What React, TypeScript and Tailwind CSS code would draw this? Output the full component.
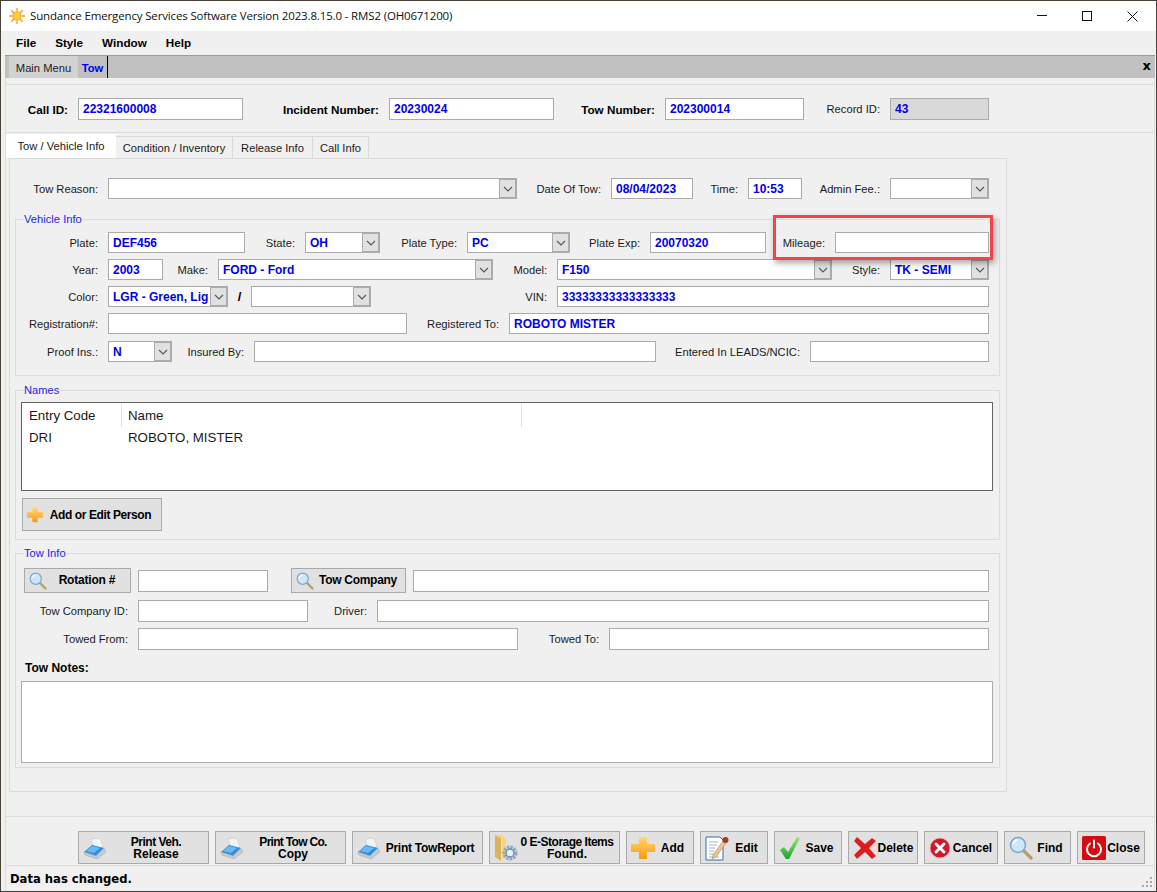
import type { ReactNode } from "react";

const sans = "font-['Liberation_Sans',Arial,sans-serif]";

function Lbl({ className = "", children }: { className?: string; children: ReactNode }) {
    return <div className={`shrink-0 whitespace-nowrap pr-[10px] pt-[1px] text-right text-[11.2px] text-[#1a1a1a] ${className}`}>{children}</div>;
}

function BoldLbl({ className = "", children }: { className?: string; children: ReactNode }) {
    return <div className={`shrink-0 whitespace-nowrap pr-[10px] pt-[2px] text-right text-[11.7px] font-bold text-black ${className}`}>{children}</div>;
}

function Field({ className = "", value, gray, tall }: { className?: string; value?: string; gray?: boolean; tall?: boolean }) {
    return (
        <div className={`flex shrink-0 items-center border border-[#ababab] px-[4px] text-[12px] font-bold text-[#0000ee] ${tall ? "h-[22px]" : "h-[21px]"} ${gray ? "bg-[#d9d9d9]" : "bg-white"} ${className}`}>
            {value}
        </div>
    );
}

function Combo({ className = "", value }: { className?: string; value?: string }) {
    return (
        <div className={`flex h-[21px] shrink-0 items-stretch border border-[#ababab] bg-white text-[12px] font-bold text-[#0000ee] ${className}`}>
            <div className="flex-1 self-center overflow-hidden whitespace-nowrap px-[4px]">{value}</div>
            <div className="flex w-[17px] shrink-0 items-center justify-center border-[1px] border-[#ababab] bg-[#e1e1e1]">
                <svg width="10" height="6" viewBox="0 0 10 6" fill="none" stroke="#555" strokeWidth="1.1">
                    <path d="M1 1l4 4 4-4" />
                </svg>
            </div>
        </div>
    );
}

function Group({ title, className = "", children }: { title: string; className?: string; children: ReactNode }) {
    return (
        <fieldset className={`ml-[5px] w-[985px] border border-[#dcdcdc] ${className}`}>
            <legend className="ml-[8px] text-[11.2px] leading-[14px] text-[#1f1fe0]">{title}</legend>
            {children}
        </fieldset>
    );
}

function Printer() {
    return (
        <svg width="24" height="24" viewBox="0 0 24 24" className="shrink-0">
            <path d="M8 3l9-1 3 9-9 2z" fill="#f4f4f4" stroke="#c8c8c8" strokeWidth=".6" />
            <path d="M1 16l8-7 12 3-8 8z" fill="#2f8fdc" />
            <path d="M3 15l6-5 8 2-6 5z" fill="#6db8f0" />
            <path d="M1 16l12 4 8-8 2 4-9 7-12-4z" fill="#c6cace" stroke="#9a9ea2" strokeWidth=".4" />
        </svg>
    );
}

function FolderGear() {
    return (
        <svg width="24" height="30" viewBox="0 0 24 30" className="shrink-0">
            <path d="M1 2l6 3v23l-6-4z" fill="#d9b45a" />
            <path d="M1 2h6l5 3v19l-4 3V6z" fill="#f1d68a" />
            <circle cx="16" cy="20" r="6" fill="none" stroke="#8fa9c4" strokeWidth="3" strokeDasharray="2.5 1" />
            <circle cx="16" cy="20" r="4" fill="#e8eef4" stroke="#6f8aa6" strokeWidth="1.4" />
        </svg>
    );
}

function Plus({ size = 24 }: { size?: number }) {
    return (
        <svg width={size} height={size} viewBox="0 0 24 24" className="shrink-0">
            <defs>
                <linearGradient id="plusFill" x1="0" y1="0" x2="0" y2="1">
                    <stop offset="0" stopColor="#ffd873" />
                    <stop offset="1" stopColor="#f79a0e" />
                </linearGradient>
            </defs>
            <path d="M8 1h8v7h8v8h-8v7H8v-7H0V8h8z" fill="url(#plusFill)" />
        </svg>
    );
}

function EditDoc() {
    return (
        <svg width="24" height="26" viewBox="0 0 24 26" className="shrink-0">
            <path d="M1 2h14l3 3v20H1z" fill="#fff" stroke="#2d6fb3" strokeWidth="1" />
            <path d="M4 7h9M4 10h8M4 13h6M4 16h5M4 19h9M4 22h10" stroke="#8fb2d6" strokeWidth=".9" />
            <path d="M8 20l10-14 3 2-10 14-4 2z" fill="#eec38f" stroke="#a9794a" strokeWidth=".5" />
            <circle cx="20.5" cy="5" r="3" fill="#9c3d2a" />
        </svg>
    );
}

function Check() {
    return (
        <svg width="22" height="24" viewBox="0 0 22 24" className="shrink-0">
            <defs>
                <linearGradient id="checkFill" x1="0" y1="0" x2="0" y2="1">
                    <stop offset="0" stopColor="#a6e27a" />
                    <stop offset="1" stopColor="#18a32b" />
                </linearGradient>
            </defs>
            <path d="M1 14l4-3 4 5L18 1l3 1-11 21h-3z" fill="url(#checkFill)" />
        </svg>
    );
}

function RedX() {
    return (
        <svg width="24" height="24" viewBox="0 0 24 24" className="shrink-0">
            <path d="M4 1l8 7 7-6 4 3-7 7 7 8-4 3-7-7-8 7-3-4 7-7-7-7z" fill="#d81e1e" stroke="#f08a8a" strokeWidth=".5" />
        </svg>
    );
}

function CancelIcon() {
    return (
        <svg width="22" height="22" viewBox="0 0 22 22" className="shrink-0">
            <circle cx="11" cy="11" r="10" fill="#d3172b" stroke="#f2b8bd" strokeWidth=".8" />
            <path d="M7 7l8 8M15 7l-8 8" stroke="#fff" strokeWidth="3" strokeLinecap="round" />
        </svg>
    );
}

function Magnifier({ size = 24 }: { size?: number }) {
    return (
        <svg width={size} height={size} viewBox="0 0 24 24" className="shrink-0">
            <path d="M14 14l8 8" stroke="#b3a06f" strokeWidth="3.2" strokeLinecap="round" />
            <circle cx="9" cy="9" r="7.5" fill="#cfe6f8" stroke="#7fa6c6" strokeWidth="1.6" />
            <path d="M4.5 8a5 5 0 0 1 4-4" fill="none" stroke="#fff" strokeWidth="1.6" />
        </svg>
    );
}

function PowerIcon() {
    return (
        <svg width="24" height="24" viewBox="0 0 24 24" className="shrink-0">
            <rect width="24" height="24" rx="1.5" fill="#d40d12" />
            <path d="M8 7.5a7 7 0 1 0 8 0M12 4.5v7" fill="none" stroke="#fff" strokeWidth="2" strokeLinecap="round" />
        </svg>
    );
}

function Sun() {
    return (
        <svg width="16" height="16" viewBox="0 0 18 18" className="shrink-0">
            <g stroke="#f6a21c" strokeWidth="1.6">
                <path d="M9 0v4M9 14v4M0 9h4M14 9h4M2.5 2.5l3 3M12.5 12.5l3 3M15.5 2.5l-3 3M5.5 12.5l-3 3" />
            </g>
            <circle cx="9" cy="9" r="4.6" fill="#ffcf3c" stroke="#f29a14" />
        </svg>
    );
}

function Btn({ className = "", icon, children, short }: { className?: string; icon: ReactNode; children: ReactNode; short?: boolean }) {
    return (
        <div className={`flex shrink-0 items-center border border-[#a9a9a9] bg-[#e1e1e1] pl-[4px] text-[12px] font-bold leading-[12.5px] text-black ${short ? "h-[25px]" : "h-[33px]"} ${className}`}>
            {icon}
            <div className={`flex-1 whitespace-nowrap pr-[3px] text-center ${short ? "" : "pt-[1px]"}`}>{children}</div>
        </div>
    );
}

export default function App() {
    return (
        <div className={`relative flex h-[892px] w-[1157px] flex-col overflow-hidden border-x border-t border-[#4a4238] bg-[#f0f0f0] ${sans}`}>
            {/* title bar */}
            <div className="flex h-[30px] shrink-0 items-center bg-white pl-[8px]">
                <Sun />
                <div className="ml-[5px] font-['Open_Sans',sans-serif] text-[11.5px] tracking-[-0.15px] text-[#111]">
                    Sundance Emergency Services Software Version 2023.8.15.0 - RMS2 (OH0671200)
                </div>
                <div className="ml-auto flex items-center">
                    <svg width="10" height="2" className="mr-[35px]"><rect width="10" height="1" fill="#111" /></svg>
                    <svg width="10" height="10" className="mr-[35px]"><rect x=".5" y=".5" width="9" height="9" fill="none" stroke="#111" /></svg>
                    <svg width="11" height="11" className="mr-[18px]"><path d="M.5.5l10 10M10.5.5l-10 10" stroke="#111" /></svg>
                </div>
            </div>

            {/* menu */}
            <div className="flex h-[24px] shrink-0 items-center gap-[19px] pl-[15px] text-[11.7px] font-bold text-black">
                <span>File</span>
                <span>Style</span>
                <span>Window</span>
                <span>Help</span>
            </div>

            {/* document tabs */}
            <div className="ml-[4px] mr-[1px] flex h-[23px] shrink-0 items-stretch border-t border-[#9a9a9a] bg-[#c0c0c0] pl-[4px] text-[11.2px]">
                <div className="flex w-[69px] items-center justify-center bg-[#d2d2d2] pt-[2px] text-[#222]">Main Menu</div>
                <div className="flex w-[30px] items-center justify-center border-r border-black pt-[2px] font-bold text-[#0000ee]">Tow</div>
                <div className="mb-[3px] ml-auto mr-[4px] self-center font-['DejaVu_Sans',sans-serif] text-[13px] font-bold leading-none text-black">x</div>
            </div>

            {/* body */}
            <div className="ml-[4px] mr-[1px] flex flex-1 flex-col border-x border-[#dcdcdc]">
                <div className="mt-[6px] flex h-[49px] shrink-0 items-center border-y border-[#dcdcdc] pl-[19px]">
                    <BoldLbl className="w-[53px]">Call ID:</BoldLbl>
                    <Field tall className="w-[165px]" value="22321600008" />
                    <BoldLbl className="w-[146px]">Incident Number:</BoldLbl>
                    <Field tall className="w-[165px]" value="20230024" />
                    <BoldLbl className="w-[111px]">Tow Number:</BoldLbl>
                    <Field tall className="w-[139px]" value="202300014" />
                    <Lbl className="w-[86px]">Record ID:</Lbl>
                    <Field tall gray className="w-[99px]" value="43" />
                </div>

                {/* tabs */}
                <div className="mt-[1px] flex h-[24px] shrink-0 items-end text-[11.2px] text-[#1a1a1a]">
                    <div className="flex h-[24px] w-[110px] items-center justify-center bg-white pt-[1px]">Tow / Vehicle Info</div>
                    <div className="flex h-[22px] w-[117px] items-center justify-center border-r border-t border-[#d9d9d9] pt-[1px]">Condition / Inventory</div>
                    <div className="flex h-[22px] w-[80px] items-center justify-center border-r border-t border-[#d9d9d9] pt-[1px]">Release Info</div>
                    <div className="flex h-[22px] w-[56px] items-center justify-center border-r border-t border-[#d9d9d9] pt-[1px]">Call Info</div>
                </div>

                <div className="ml-[3px] h-[634px] w-[998px] shrink-0 border border-[#d9d9d9]">
                    <div className="mt-[19px] flex items-center">
                        <Lbl className="w-[98px]">Tow Reason:</Lbl>
                        <Combo className="w-[409px]" />
                        <Lbl className="w-[94px]">Date Of Tow:</Lbl>
                        <Field className="w-[82px]" value="08/04/2023" />
                        <Lbl className="w-[55px]">Time:</Lbl>
                        <Field className="w-[54px]" value="10:53" />
                        <Lbl className="w-[88px]">Admin Fee.:</Lbl>
                        <Combo className="w-[99px]" />
                    </div>

                    <Group title="Vehicle Info" className="mt-[13px] h-[164px]">
                        <div className="mt-[6px] flex items-center">
                            <Lbl className="w-[92px]">Plate:</Lbl>
                            <Field className="w-[137px]" value="DEF456" />
                            <Lbl className="w-[60px]">State:</Lbl>
                            <Combo className="w-[75px]" value="OH" />
                            <Lbl className="w-[87px]">Plate Type:</Lbl>
                            <Combo className="w-[103px]" value="PC" />
                            <Lbl className="w-[80px]">Plate Exp:</Lbl>
                            <Field className="w-[116px]" value="20070320" />
                            <Lbl className="w-[69px]">Mileage:</Lbl>
                            <Field className="w-[154px]" />
                        </div>
                        <div className="mt-[6px] flex items-center">
                            <Lbl className="w-[92px]">Year:</Lbl>
                            <Field className="w-[55px]" value="2003" />
                            <Lbl className="w-[55px]">Make:</Lbl>
                            <Combo className="w-[275px]" value="FORD - Ford" />
                            <Lbl className="w-[64px]">Model:</Lbl>
                            <Combo className="w-[275px]" value="F150" />
                            <Lbl className="w-[58px]">Style:</Lbl>
                            <Combo className="w-[99px]" value="TK - SEMI" />
                        </div>
                        <div className="mt-[6px] flex items-center">
                            <Lbl className="w-[92px]">Color:</Lbl>
                            <Combo className="w-[120px]" value="LGR - Green, Lig" />
                            <div className="w-[23px] shrink-0 text-center text-[13px] font-bold text-black">/</div>
                            <Combo className="w-[120px]" />
                            <Lbl className="w-[186px]">VIN:</Lbl>
                            <Field className="w-[432px]" value="33333333333333333" />
                        </div>
                        <div className="mt-[6px] flex items-center">
                            <Lbl className="w-[92px]">Registration#:</Lbl>
                            <Field className="w-[299px]" />
                            <Lbl className="w-[102px]">Registered To:</Lbl>
                            <Field className="w-[480px]" value="ROBOTO MISTER" />
                        </div>
                        <div className="mt-[7px] flex items-center">
                            <Lbl className="w-[92px]">Proof Ins.:</Lbl>
                            <Combo className="w-[64px]" value="N" />
                            <Lbl className="w-[82px]">Insured By:</Lbl>
                            <Field className="w-[402px]" />
                            <Lbl className="w-[154px]">Entered In LEADS/NCIC:</Lbl>
                            <Field className="w-[179px]" />
                        </div>
                    </Group>

                    <Group title="Names" className="mt-[7px] h-[157px]">
                        <div className="ml-[5px] mt-[5px] h-[89px] w-[972px] border border-[#646464] bg-white text-[13.3px] text-[#1a1a1a]">
                            <div className="flex h-[24px] items-center">
                                <div className="h-full w-[100px] border-r border-[#e4e4e4] pl-[7px] pt-[1px] leading-[24px]">Entry Code</div>
                                <div className="h-full w-[400px] border-r border-[#e4e4e4] pl-[6px] pt-[1px] leading-[24px]">Name</div>
                            </div>
                            <div className="flex items-center pt-[1px] leading-[20px]">
                                <div className="w-[99px] pl-[7px]">DRI</div>
                                <div className="pl-[7px]">ROBOTO, MISTER</div>
                            </div>
                        </div>
                        <Btn className="ml-[6px] mt-[7px] w-[140px] tracking-[-0.4px]" icon={<Plus size={16} />}>
                            Add or Edit Person
                        </Btn>
                    </Group>

                    <Group title="Tow Info" className="mt-[6px] h-[222px]">
                        <div className="mt-[8px] flex items-center">
                            <Btn short className="ml-[8px] w-[107px] tracking-[-0.2px]" icon={<Magnifier size={18} />}>Rotation #</Btn>
                            <Field tall className="ml-[7px] w-[130px]" />
                            <Btn short className="ml-[23px] w-[115px] tracking-[-0.3px]" icon={<Magnifier size={18} />}>Tow Company</Btn>
                            <Field tall className="ml-[7px] w-[576px]" />
                        </div>
                        <div className="mt-[7px] flex items-center">
                            <Lbl className="w-[122px]">Tow Company ID:</Lbl>
                            <Field tall className="w-[170px]" />
                            <Lbl className="w-[69px]">Driver:</Lbl>
                            <Field tall className="w-[612px]" />
                        </div>
                        <div className="mt-[6px] flex items-center">
                            <Lbl className="w-[122px]">Towed From:</Lbl>
                            <Field tall className="w-[380px]" />
                            <Lbl className="w-[91px]">Towed To:</Lbl>
                            <Field tall className="w-[380px]" />
                        </div>
                        <div className="ml-[9px] mt-[11px] text-[12px] font-bold leading-[14px] text-black">Tow Notes:</div>
                        <div className="ml-[5px] mt-[6px] h-[82px] w-[972px] border border-[#ababab] bg-white" />
                    </Group>
                </div>

                {/* action buttons */}
                <div className="mt-[24px] flex h-[50px] shrink-0 gap-[6px] border-y border-[#dcdcdc] pl-[72px] pt-[14px]">
                    <Btn className="w-[131px]" icon={<Printer />}><span className="tracking-[-0.5px]">Print Veh.</span><br />Release</Btn>
                    <Btn className="w-[131px]" icon={<Printer />}><span className="tracking-[-0.7px]">Print Tow Co.</span><br />Copy</Btn>
                    <Btn className="w-[131px] tracking-[-0.25px]" icon={<Printer />}>Print TowReport</Btn>
                    <Btn className="w-[131px]" icon={<FolderGear />}><span className="tracking-[-0.5px]">0 E-Storage Items</span><br />Found.</Btn>
                    <Btn className="w-[68px]" icon={<Plus />}>Add</Btn>
                    <Btn className="w-[68px]" icon={<EditDoc />}>Edit</Btn>
                    <Btn className="w-[68px]" icon={<Check />}>Save</Btn>
                    <Btn className="w-[70px]" icon={<RedX />}>Delete</Btn>
                    <Btn className="w-[74px]" icon={<CancelIcon />}>Cancel</Btn>
                    <Btn className="w-[67px]" icon={<Magnifier />}>Find</Btn>
                    <Btn className="w-[68px]" icon={<PowerIcon />}>Close</Btn>
                </div>

                {/* status bar */}
                <div className="flex flex-1 items-center justify-between pl-[4px] pr-[1px]">
                    <span className="pt-[3px] font-['DejaVu_Sans',sans-serif] text-[11.6px] font-bold text-black">Data has changed.</span>
                    <svg width="12" height="12" viewBox="0 0 12 12" className="mt-[8px]" fill="#a8a8a8">
                        <rect x="9" y="0" width="2" height="2" />
                        <rect x="5" y="4" width="2" height="2" />
                        <rect x="9" y="4" width="2" height="2" />
                        <rect x="1" y="8" width="2" height="2" />
                        <rect x="5" y="8" width="2" height="2" />
                        <rect x="9" y="8" width="2" height="2" />
                    </svg>
                </div>
            </div>

            {/* red annotation box drawn over the form */}
            <div className="absolute left-[772px] top-[214px] h-[45px] w-[220px] border-[3px] border-[#f2434b] shadow-[2px_3px_6px_rgba(0,0,0,0.35)]" />
            <div className="h-[1px] shrink-0 bg-[#4a4238]" />
        </div>
    );
}
